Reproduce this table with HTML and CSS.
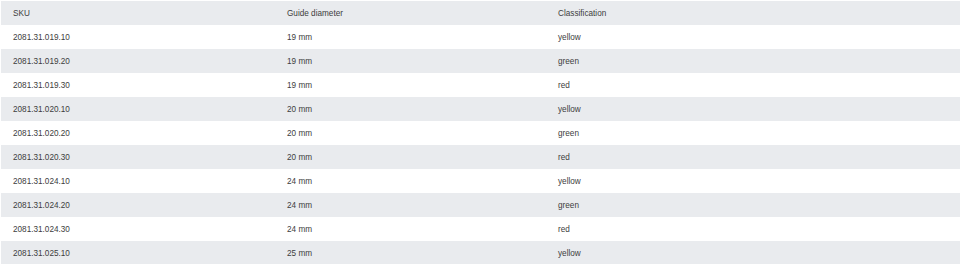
FILE: index.html
```html
<!DOCTYPE html>
<html lang="en">
<head>
<meta charset="utf-8">
<title>Guide table</title>
<link rel="stylesheet" href="styles.css">
</head>
<body>
<div class="wrap">
<table class="spec">
<colgroup><col class="c1"><col class="c2"><col class="c3"></colgroup>
<thead>
<tr><th>SKU</th><th>Guide diameter</th><th>Classification</th></tr>
</thead>
<tbody>
<tr><td>2081.31.019.10</td><td>19 mm</td><td>yellow</td></tr>
<tr><td>2081.31.019.20</td><td>19 mm</td><td>green</td></tr>
<tr><td>2081.31.019.30</td><td>19 mm</td><td>red</td></tr>
<tr><td>2081.31.020.10</td><td>20 mm</td><td>yellow</td></tr>
<tr><td>2081.31.020.20</td><td>20 mm</td><td>green</td></tr>
<tr><td>2081.31.020.30</td><td>20 mm</td><td>red</td></tr>
<tr><td>2081.31.024.10</td><td>24 mm</td><td>yellow</td></tr>
<tr><td>2081.31.024.20</td><td>24 mm</td><td>green</td></tr>
<tr><td>2081.31.024.30</td><td>24 mm</td><td>red</td></tr>
<tr><td>2081.31.025.10</td><td>25 mm</td><td>yellow</td></tr>
</tbody>
</table>
</div>
</body>
</html>
```
FILE: styles.css
```css
html, body {
  margin: 0;
  padding: 0;
  background: #ffffff;
}
.wrap {
  padding: 1px 0 0 1px;
}
.spec {
  width: 959px;
  border-collapse: collapse;
  table-layout: fixed;
  font-family: "Liberation Sans", Arial, sans-serif;
  font-size: 8.2px;
  color: #3d3d3d;
}
.c1 { width: 274px; }
.c2 { width: 271px; }
.c3 { width: 414px; }
.spec th,
.spec td {
  height: 24px;
  padding: 2px 12px 0;
  text-align: left;
  font-weight: normal;
  vertical-align: middle;
  box-sizing: border-box;
  line-height: 10px;
}
.spec thead tr {
  background: #e9ebee;
}
.spec tbody tr:nth-child(even) {
  background: #e9ebee;
}
```
